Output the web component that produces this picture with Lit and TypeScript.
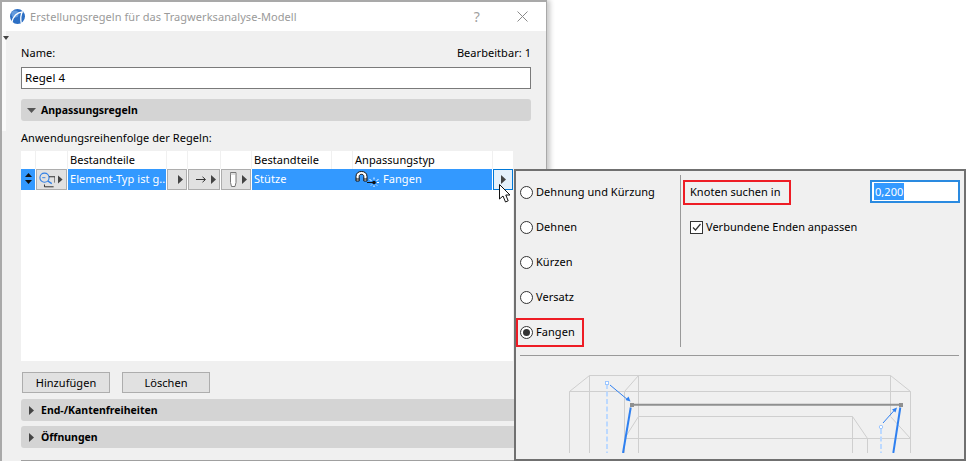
import { LitElement, html, css, svg } from "lit";
import { customElement } from "lit/decorators.js";

const tri = (dir: "r" | "d") =>
  dir === "r"
    ? html`<svg class="tri" width="5" height="9" viewBox="0 0 5 9"><path d="M0 0L5 4.5L0 9Z" fill="#444"/></svg>`
    : html`<svg class="tri" width="9" height="5" viewBox="0 0 9 5"><path d="M0 0H9L4.5 5Z" fill="#555"/></svg>`;

@customElement("app-root")
export class AppRoot extends LitElement {
  static styles = css`
    :host { display: block; position: relative; width: 966px; height: 461px; overflow: hidden; background: #fff;
      font-family: "Noto Sans", "Open Sans", sans-serif; font-size: 11px; letter-spacing: 0.05px; color: #000; }
    .window { position: absolute; left: 0; top: 0; width: 547px; height: 461px; box-sizing: border-box;
      border-top: 2px solid #a9a9a9; border-left: 2px solid #a9a9a9; border-right: 1px solid #a9a9a9;
      box-shadow: 3px 0 5px rgba(0,0,0,.22); display: flex; flex-direction: column; background: #f0f0f0; }
    .title { height: 29px; flex: none; background: #fff; display: flex; align-items: center; padding: 0 18px 0 8px; color: #9a9a9a; letter-spacing: .06px; }
    .title .logo { margin-right: 5px; }
    .title .name { flex: 1; }
    .title .help { font-size: 14px; color: #a0a0a0; margin-right: 37px; }
    .tab { position: absolute; left: 0; top: 29px; width: 4px; height: 100px; background: #fafafa; display: flex; align-items: flex-start; padding: 5px 0 0 1px; box-sizing: border-box; overflow: visible; }
    .tab svg { flex: none; }
    .content { flex: 1; display: flex; flex-direction: column; padding: 14px 15px 0 19px; min-height: 0; }
    .namerow { display: flex; justify-content: space-between; height: 16px; line-height: 16px; margin-bottom: 6px; }
    .input { height: 22px; box-sizing: border-box; border: 1px solid #7a7a7a; background: #fff; line-height: 19px; padding-left: 3px; font-size: 11.5px; }
    .bar { height: 22px; flex: none; border-radius: 3px; background: #d4d4d4; display: flex; align-items: center; font-weight: 700; font-size: 10.5px; letter-spacing: 0; padding: 0 0 0 6px; box-sizing: border-box; gap: 5px; }
    .bar .tri { flex: none; }
    .bar .ic { width: 9px; display: flex; justify-content: center; }
    .b1 { margin-top: 10px; }
    .order { height: 16px; line-height: 16px; margin-top: 9px; margin-bottom: 5px; }
    .table { width: 492px; height: 210px; background: #fff; flex: none; }
    .cols { display: grid; grid-template-columns: 14px 31px 98px 20px 32px 30px 79px 20px 139px 20px; column-gap: 1px; }
    .head { background: #f0f0f0; height: 18px; }
    .head > div { background: #fff; line-height: 18px; padding-left: 2px; white-space: nowrap; }
    .row { height: 21px; }
    .row > div { min-width: 0; box-sizing: border-box; }
    .sel { background: #3399ff; color: #fff; line-height: 19px; padding: 0 0 2px 2px; white-space: nowrap; display: flex; align-items: center; }
    .span3 { grid-column: span 3; }
    .stz { width: 101px; flex: none; }
    .anp { margin-right: 4px; flex: none; }
    .btn { background: #e1e1e1; border: 1px solid #adadad; display: flex; align-items: center; justify-content: flex-end; padding-right: 3px; gap: 3px; }
    .btn.wide { justify-content: space-between; padding-left: 2px; }
    .hot { background: #e5f1fb; border: 1px solid #0078d7; display: flex; align-items: center; justify-content: center; }
    .buttons { display: flex; gap: 12px; margin: 11px 0 6px 1px; }
    .buttons button { width: 88px; height: 21px; box-sizing: border-box; border: 1px solid #adadad; background: #e1e1e1; font: inherit; letter-spacing: inherit; padding: 0; color: #000; }
    .b3 { margin-top: 5px; }
    .rule { margin-top: 12px; height: 1px; background: #a0a0a0; margin-right: -14px; }

    .popup { position: absolute; left: 514px; top: 169px; width: 452px; height: 292px; box-sizing: border-box; border: 2px solid #707070; background: #f0f0f0; padding-top: 4px; display: flex; flex-direction: column; }
    .top { display: flex; height: 172px; flex: none; }
    .radios { width: 164px; flex: none; display: flex; flex-direction: column; gap: 6px; padding: 3px 0 0 4px; box-sizing: border-box; }
    .radio { height: 29px; display: flex; align-items: center; gap: 3px; box-sizing: border-box; }
    .radio span:last-child { padding-bottom: 2px; }
    .radio.mark { margin-left: -4px; padding-left: 2px; width: 68px; border: 2px solid #ee1c25; }
    .dot { width: 13px; height: 13px; box-sizing: border-box; border: 1px solid #333; border-radius: 50%; background: #fff; flex: none; display: flex; align-items: center; justify-content: center; }
    .dot.on::after { content: ""; width: 7px; height: 7px; border-radius: 50%; background: #333; }
    .right { flex: 1; border-left: 1px solid #999; padding: 5px 4px 0 9px; box-sizing: border-box; min-width: 0; }
    .knoten { display: flex; align-items: flex-start; justify-content: space-between; }
    .klabel { margin-left: -7px; width: 108px; height: 25px; box-sizing: border-box; border: 2px solid #ee1c25; padding-left: 5px; line-height: 19px; white-space: nowrap; }
    .val { width: 90px; height: 23px; box-sizing: border-box; border: 2px solid #2a8ae0; background: #fff; padding-left: 2px; display: flex; align-items: center; }
    .val span { background: #3399ff; color: #fff; line-height: 17px; padding: 0 1px; }
    .check { display: flex; align-items: center; gap: 3px; height: 16px; margin-top: 14px; letter-spacing: 0; }
    .check span:last-child { padding-bottom: 1px; }
    .box { width: 13px; height: 13px; box-sizing: border-box; border: 1px solid #333; background: #fff; display: flex; flex: none; }
    .hr { height: 1px; background: #999; margin: 8px 5px 0 4px; flex: none; }
    .diagram { display: block; flex: none; margin-top: 4px; }
    .cursor { position: absolute; left: 499px; top: 184px; }
  `;

  private diagram() {
    const thin = [
      "M569.5 453V391.5H910.5V453", "M589.5 453V375.5H890.5", "M569.5 391.5L589.5 375.5",
      "M624.5 453V391.5L638.5 375.5V453", "M890.5 375.5V416", "M890.5 375.5L910.5 391.5",
      "M638.5 416.5H852.5L867.5 438.5V453", "M852.5 416.5V453", "M890.5 416.5L910.5 438.5",
      "M624.5 438.5H910.5", "M638.5 416.5L624.5 438.5",
    ];
    return svg`<svg class="diagram" width="448" height="93" viewBox="516 360 448 93">
      ${thin.map((d) => svg`<path d=${d} fill="none" stroke="#cfcfcf" stroke-width="1"/>`)}
      <path d="M607 384V453" stroke="#bcd9ff" stroke-width="2" stroke-dasharray="5 2.5"/>
      <rect x="605.5" y="381.5" width="3" height="3" fill="#fff" stroke="#9cc6ff"/>
      <path d="M610 385L628 400" stroke="#2f80f0" stroke-width="1"/>
      <path d="M630.5 401.5L625.5 400L628.5 396.5Z" fill="#2f80f0"/>
      <path d="M630.7 407.5L623 453" stroke="#2f80f0" stroke-width="2"/>
      <path d="M881 429V453" stroke="#bcd9ff" stroke-width="2" stroke-dasharray="5 2.5"/>
      <circle cx="881" cy="427" r="1.7" fill="#fff" stroke="#9cc6ff"/>
      <path d="M883 423L895 409.5" stroke="#2f80f0" stroke-width="1"/>
      <path d="M897 407.5L895.5 412.5L892 409.5Z" fill="#2f80f0"/>
      <path d="M900.3 407.5L893.3 453" stroke="#2f80f0" stroke-width="2"/>
      <path d="M632 404.8H900" stroke="#8f9090" stroke-width="2"/>
      <rect x="630" y="403" width="4" height="4" fill="#8f9090"/>
      <rect x="899" y="403" width="4" height="4" fill="#8f9090"/>
    </svg>`;
  }

  render() {
    const radios = ["Dehnung und Kürzung", "Dehnen", "Kürzen", "Versatz"];
    return html`
      <div class="window">
        <div class="title">
          <svg class="logo" width="15" height="15" viewBox="0 0 15 15">
            <circle cx="7.5" cy="7.5" r="7.5" fill="#2c6fc4"/>
            <circle cx="5" cy="5" r="3.6" fill="#79ace8" opacity=".7"/>
            <path d="M2 13.2C3 7.5 7 3.2 12.3 3C10.6 6 10.5 10 11.2 14" fill="none" stroke="#fff" stroke-width="1.3"/>
          </svg>
          <span class="name">Erstellungsregeln für das Tragwerksanalyse-Modell</span>
          <span class="help">?</span>
          <svg width="11" height="11" viewBox="0 0 11 11"><path d="M.5 .5L10.5 10.5M10.5 .5L.5 10.5" stroke="#8a8a8a" fill="none"/></svg>
        </div>
        <div class="tab"><svg width="6" height="4" viewBox="0 0 6 4"><path d="M0 0H6L3 4Z" fill="#444"/></svg></div>
        <div class="content">
          <div class="namerow"><span>Name:</span><span>Bearbeitbar: 1</span></div>
          <div class="input">Regel 4</div>
          <div class="bar b1"><span class="ic">${tri("d")}</span>Anpassungsregeln</div>
          <div class="order">Anwendungsreihenfolge der Regeln:</div>
          <div class="table">
            <div class="cols head">
              <div></div><div></div><div>Bestandteile</div><div></div><div></div><div></div>
              <div>Bestandteile</div><div></div><div>Anpassungstyp</div><div></div>
            </div>
            <div class="cols row">
              <div class="sel">
                <svg width="9" height="11" viewBox="0 0 9 11" style="margin-left:1px"><path d="M4.5 0L8 4H1ZM4.5 11L1 7H8Z" fill="#111"/></svg>
              </div>
              <div class="btn wide">
                <svg width="18" height="17" viewBox="0 0 18 17">
                  <circle cx="6" cy="6.5" r="5" fill="none" stroke="#2f7fe6" stroke-width="1.2"/>
                  <path d="M9.5 10L14 13" stroke="#2f7fe6" stroke-width="1.4"/>
                  <path d="M3.5 6.5H7" stroke="#2f7fe6"/>
                  <path d="M11 5.5H17.5V12M6 14V16.5H16" fill="none" stroke="#222"/>
                </svg>
                ${tri("r")}
              </div>
              <div class="sel">Element-Typ ist g...</div>
              <div class="btn">${tri("r")}</div>
              <div class="btn wide">
                <svg width="11" height="7" viewBox="0 0 11 7" style="margin-left:5px"><path d="M0 3.5H9M6.5 .8L9.5 3.5L6.5 6.2" fill="none" stroke="#333"/></svg>
                ${tri("r")}
              </div>
              <div class="btn wide">
                <svg width="15" height="17" viewBox="0 0 15 17"><path d="M6.5 1.5H12V11.5L11 15.5H7.5L6.5 11.5Z" fill="#fff" stroke="#777"/><path d="M6.5 3H12" stroke="#bbb"/></svg>
                ${tri("r")}
              </div>
              <div class="sel span3">
                <span class="stz">Stütze</span>
                <svg class="anp" width="24" height="16" viewBox="0 0 24 16">
                  <path d="M1 10V5.5C1 2 3.5 .5 6.5 .5S12 2 12 5.5V10H8.8V5.5C8.8 3.8 7.6 3.3 6.5 3.3S4.2 3.8 4.2 5.5V10Z" fill="#fff" stroke="#111"/>
                  <path d="M1 8H4.2M8.8 8H12" stroke="#111"/>
                  <path d="M12 11.5H18" stroke="#111"/>
                  <circle cx="19" cy="11.5" r="1.8" fill="#111"/>
                  <path d="M19 6.5V8.5M19 14.5V16M14.5 8.5L16.5 9.5M23.5 8.5L21.5 9.5M16 14.5L17 13.5M22 14.5L21 13.5M22 11.5H24" stroke="#fff"/>
                </svg>
                <span>Fangen</span>
              </div>
              <div class="hot">${tri("r")}</div>
            </div>
          </div>
          <div class="buttons"><button>Hinzufügen</button><button>Löschen</button></div>
          <div class="bar"><span class="ic">${tri("r")}</span>End-/Kantenfreiheiten</div>
          <div class="bar b3"><span class="ic">${tri("r")}</span>Öffnungen</div>
          <div class="rule"></div>
        </div>
      </div>

      <svg class="cursor" width="12" height="20" viewBox="0 0 12 20">
        <path d="M.5 .5V15L4 12L6.5 18L9.2 16.8L6.8 11H11Z" fill="#fff" stroke="#111" stroke-linejoin="round"/>
      </svg>

      <div class="popup">
        <div class="top">
          <div class="radios">
            ${radios.map((r) => html`<div class="radio"><span class="dot"></span><span>${r}</span></div>`)}
            <div class="radio mark"><span class="dot on"></span><span>Fangen</span></div>
          </div>
          <div class="right">
            <div class="knoten">
              <div class="klabel">Knoten suchen in</div>
              <div class="val"><span>0,200</span></div>
            </div>
            <div class="check">
              <span class="box"><svg width="11" height="11" viewBox="0 0 11 11"><path d="M2 5.5L4.5 8L9.5 2" fill="none" stroke="#333" stroke-width="1.2"/></svg></span>
              <span>Verbundene Enden anpassen</span>
            </div>
          </div>
        </div>
        <div class="hr"></div>
        ${this.diagram()}
      </div>
    `;
  }
}
